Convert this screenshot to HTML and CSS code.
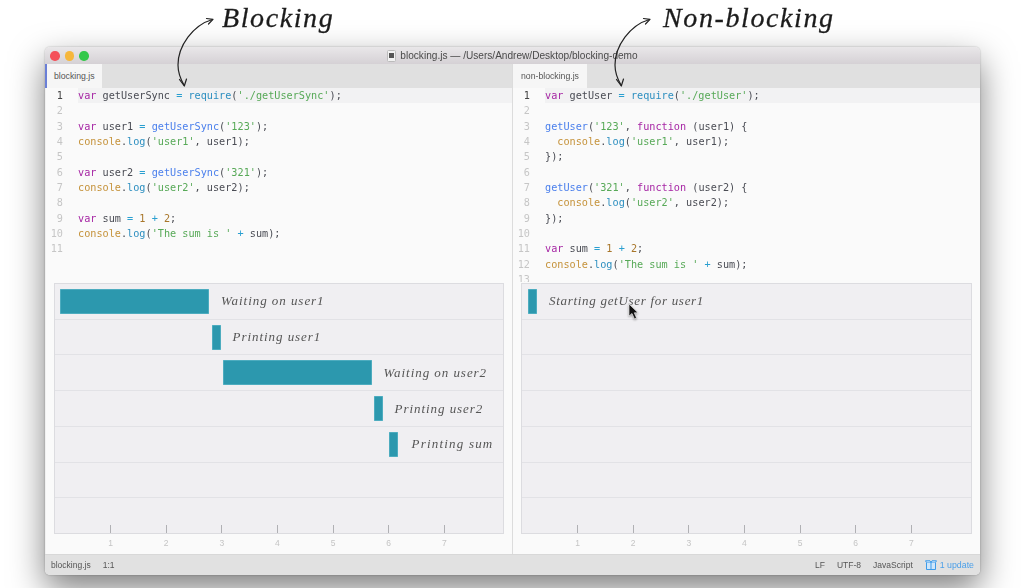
FILE: index.html
```html
<!DOCTYPE html>
<html lang="en">
<head>
<meta charset="utf-8">
<title>blocking.js</title>
<link rel="stylesheet" href="styles.css">
</head>
<body>
<div class="note note-a">Blocking</div>
<div class="note note-b">Non-blocking</div>
<svg class="arrow arrow-a" width="60" height="80" viewBox="0 0 60 80" fill="none" stroke="#222" stroke-width="1.2" stroke-linecap="round" stroke-linejoin="round"><path d="M35.500 6.500C16 12 1 33 1 52C1 60 3.500 66 7 72"/><path d="M29.500 5.500L36 6.300L31.500 11"/><path d="M2.500 66.500L7.300 73L9.500 66"/></svg>
<svg class="arrow arrow-b" width="60" height="80" viewBox="0 0 60 80" fill="none" stroke="#222" stroke-width="1.2" stroke-linecap="round" stroke-linejoin="round"><path d="M35.500 6.500C16 12 1 33 1 52C1 60 3.500 66 7 72"/><path d="M29.500 5.500L36 6.300L31.500 11"/><path d="M2.500 66.500L7.300 73L9.500 66"/></svg>
<div class="window">
  <header class="titlebar">
    <div class="lights"><i class="light red"></i><i class="light yellow"></i><i class="light green"></i></div>
    <div class="title"><svg class="doc" width="9" height="12" viewBox="0 0 9 12"><rect x="0.500" y="0.500" width="8" height="11" rx="1" fill="#f2f2f2" stroke="#bbb"/><rect x="2" y="3" width="5" height="5" fill="#555"/></svg><span>blocking.js — /Users/Andrew/Desktop/blocking-demo</span></div>
  </header>
  <main class="panes">
    <section class="pane pane-left">
      <div class="tabs"><div class="tab tab-focus">blocking.js</div></div>
      <div class="code">
        <div class="line current"><span class="ln">1</span><span class="src"><b class="k">var</b> getUserSync <b class="o">=</b> <b class="r">require</b>(<b class="s">'./getUserSync'</b>);</span></div>
        <div class="line"><span class="ln">2</span><span class="src"></span></div>
        <div class="line"><span class="ln">3</span><span class="src"><b class="k">var</b> user1 <b class="o">=</b> <b class="f">getUserSync</b>(<b class="s">'123'</b>);</span></div>
        <div class="line"><span class="ln">4</span><span class="src"><b class="c">console</b>.<b class="r">log</b>(<b class="s">'user1'</b>, user1);</span></div>
        <div class="line"><span class="ln">5</span><span class="src"></span></div>
        <div class="line"><span class="ln">6</span><span class="src"><b class="k">var</b> user2 <b class="o">=</b> <b class="f">getUserSync</b>(<b class="s">'321'</b>);</span></div>
        <div class="line"><span class="ln">7</span><span class="src"><b class="c">console</b>.<b class="r">log</b>(<b class="s">'user2'</b>, user2);</span></div>
        <div class="line"><span class="ln">8</span><span class="src"></span></div>
        <div class="line"><span class="ln">9</span><span class="src"><b class="k">var</b> sum <b class="o">=</b> <b class="n">1</b> <b class="o">+</b> <b class="n">2</b>;</span></div>
        <div class="line"><span class="ln">10</span><span class="src"><b class="c">console</b>.<b class="r">log</b>(<b class="s">'The sum is '</b> <b class="o">+</b> sum);</span></div>
        <div class="line"><span class="ln">11</span><span class="src"></span></div>
      </div>
      <div class="chart">
        <div class="row"><i class="bar" style="margin-left:5px;width:149px"></i><span class="label">Waiting on user1</span></div>
        <div class="row"><i class="bar" style="margin-left:157px;width:8.500px"></i><span class="label">Printing user1</span></div>
        <div class="row"><i class="bar" style="margin-left:168px;width:148.500px"></i><span class="label">Waiting on user2</span></div>
        <div class="row"><i class="bar" style="margin-left:319px;width:8.500px"></i><span class="label">Printing user2</span></div>
        <div class="row"><i class="bar" style="margin-left:334px;width:8.500px"></i><span class="label label-sum">Printing sum</span></div>
        <div class="row"></div>
        <div class="row row-ticks"><i></i><i></i><i></i><i></i><i></i><i></i><i></i></div>
      </div>
      <div class="axis"><span>1</span><span>2</span><span>3</span><span>4</span><span>5</span><span>6</span><span>7</span></div>
    </section>
    <section class="pane">
      <div class="tabs"><div class="tab">non-blocking.js</div></div>
      <div class="code">
        <div class="line current"><span class="ln">1</span><span class="src"><b class="k">var</b> getUser <b class="o">=</b> <b class="r">require</b>(<b class="s">'./getUser'</b>);</span></div>
        <div class="line"><span class="ln">2</span><span class="src"></span></div>
        <div class="line"><span class="ln">3</span><span class="src"><b class="f">getUser</b>(<b class="s">'123'</b>, <b class="k">function</b> (user1) {</span></div>
        <div class="line"><span class="ln">4</span><span class="src">  <b class="c">console</b>.<b class="r">log</b>(<b class="s">'user1'</b>, user1);</span></div>
        <div class="line"><span class="ln">5</span><span class="src">});</span></div>
        <div class="line"><span class="ln">6</span><span class="src"></span></div>
        <div class="line"><span class="ln">7</span><span class="src"><b class="f">getUser</b>(<b class="s">'321'</b>, <b class="k">function</b> (user2) {</span></div>
        <div class="line"><span class="ln">8</span><span class="src">  <b class="c">console</b>.<b class="r">log</b>(<b class="s">'user2'</b>, user2);</span></div>
        <div class="line"><span class="ln">9</span><span class="src">});</span></div>
        <div class="line"><span class="ln">10</span><span class="src"></span></div>
        <div class="line"><span class="ln">11</span><span class="src"><b class="k">var</b> sum <b class="o">=</b> <b class="n">1</b> <b class="o">+</b> <b class="n">2</b>;</span></div>
        <div class="line"><span class="ln">12</span><span class="src"><b class="c">console</b>.<b class="r">log</b>(<b class="s">'The sum is '</b> <b class="o">+</b> sum);</span></div>
        <div class="line line-clipped"><span class="ln">13</span><span class="src"></span></div>
      </div>
      <div class="chart">
        <div class="row"><i class="bar" style="margin-left:6px;width:9px"></i><span class="label label-long">Starting getUser for user1</span></div>
        <div class="row"></div>
        <div class="row"></div>
        <div class="row"></div>
        <div class="row"></div>
        <div class="row"></div>
        <div class="row row-ticks"><i></i><i></i><i></i><i></i><i></i><i></i><i></i></div>
      </div>
      <div class="axis"><span>1</span><span>2</span><span>3</span><span>4</span><span>5</span><span>6</span><span>7</span></div>
    </section>
  </main>
  <footer class="status">
    <span>blocking.js</span><span class="pos">1:1</span>
    <span class="right">LF</span><span>UTF-8</span><span>JavaScript</span>
    <span class="update"><svg width="12" height="10" viewBox="0 0 12 10" fill="#cfe6fa" stroke="#3d9be9" stroke-width="1"><path d="M1.500 2.500h9v7h-9z"/><path d="M1.500 2.500L.5 .8h4.500L6 2.500L7 .8h4.500l-1 1.700M6 2.500v7"/></svg>1 update</span>
  </footer>
</div>
<svg class="cursor" width="12" height="17" viewBox="0 0 12 17"><path d="M1 1V13L4 10.500L6.500 16L8.500 15L6.300 9.800H10Z" fill="#111" stroke="#fff" stroke-width=".6"/></svg>
</body>
</html>
```
FILE: styles.css
```css
* { box-sizing: border-box; }
html, body { margin: 0; height: 100%; }
body {
  position: relative;
  width: 1022px;
  height: 588px;
  overflow: hidden;
  background: #fff;
  padding: 47px 0 0 45px;
  font-family: "Liberation Sans", Arial, sans-serif;
  filter: blur(0.35px);
}
.note {
  position: absolute;
  top: 2px;
  font-family: "Liberation Serif", serif;
  font-style: italic;
  font-size: 28px;
  line-height: 32px;
  color: #1c1c1c;
  letter-spacing: 1.600px;
  -webkit-text-stroke: .3px #1c1c1c;
}
.note-a { left: 222px; }
.note-b { left: 663px; }
.arrow { position: absolute; z-index: 2; top: 13px; }
.arrow-a { left: 177px; }
.arrow-b { left: 614px; }
.cursor { position: absolute; left: 628px; top: 303px; z-index: 3; filter: drop-shadow(0 1px 1px rgba(0,0,0,.4)); }
.window {
  width: 935px;
  height: 528px;
  border-radius: 5px;
  overflow: hidden;
  display: flex;
  flex-direction: column;
  background: #fafafa;
  box-shadow: 0 14px 34px rgba(0,0,0,.5), 0 0 2px rgba(0,0,0,.3);
}
.titlebar {
  position: relative;
  flex: 0 0 17px;
  display: flex;
  align-items: center;
  justify-content: center;
  background: linear-gradient(#e9e7e9, #d5d1d5);
}
.lights { position: absolute; left: 5.300px; top: 4px; display: flex; gap: 5px; }
.light { width: 9.500px; height: 9.500px; border-radius: 50%; }
.red { background: #f4515a; }
.yellow { background: #f6b73c; }
.green { background: #34c84a; }
.title { display: flex; align-items: center; gap: 4px; font-size: 10.100px; color: #4a4a4a; }
.panes { flex: 1; display: flex; min-height: 0; }
.pane { flex: 0 0 467px; min-width: 0; display: flex; flex-direction: column; }
.pane-left { flex: 0 0 468px; border-right: 1px solid #dcdcdc; border-left: 1px solid #f0f0f0; }
.tabs { flex: 0 0 24px; background: #e0e0e0; display: flex; }
.tab { width: 74px; background: #f6f6f6; font-size: 8.700px; line-height: 24px; color: #555; padding-left: 8px; }
.tab-focus { width: 57px; border-left: 2px solid #6a7fd6; margin-left: -1px; padding-left: 7px; }
.code {
  flex: 0 0 195px;
  overflow: hidden;
  font-family: "DejaVu Sans Mono", monospace;
  font-size: 10.200px;
  line-height: 15.350px;
  color: #4a4c54;
}
.line { display: flex; height: 15.350px; }
.line-clipped { height: 10px; line-height: 15.350px; overflow: hidden; }
.ln { flex: 0 0 17px; text-align: right; color: #c6c6c6; }
.src { flex: 1; margin-left: 15px; white-space: pre; }
.current .ln { color: #444; }
.current .src { background: #f2f2f3; }
.code b { font-weight: normal; }
.k { color: #a626a4; }
.o { color: #2a9fd0; }
.r { color: #2d8fc0; }
.f { color: #4a7fec; }
.s { color: #57a957; }
.c { color: #c5923a; }
.n { color: #a8762a; }
.chart {
  flex: 0 0 251px;
  margin: 0 8px;
  display: flex;
  flex-direction: column;
  background: #f0eff2;
  border: 1px solid #dcdce0;
  border-bottom-width: 1.500px;
}
.row {
  flex: 1;
  display: flex;
  align-items: center;
  border-bottom: 1px solid #e2e2e6;
}
.row:last-child { border-bottom: 0; }
.bar { flex: none; height: 25px; background: #2c98ae; box-shadow: inset 0 0 0 .5px #6fc0d0; }
.label {
  margin-left: 12px;
  font-family: "Liberation Serif", serif;
  font-style: italic;
  font-size: 13px;
  letter-spacing: .95px;
  color: #555;
  white-space: nowrap;
}
.label-sum { margin-left: 14px; letter-spacing: 1.200px; }
.label-long { letter-spacing: .7px; }
.row-ticks {
  align-items: flex-end;
  padding-left: 27.700px;
}
.row-ticks i { flex: 0 0 55.650px; display: flex; justify-content: center; }
.row-ticks i::before { content: ""; width: 1px; height: 8px; background: #b0b0b4; }
.axis {
  flex: 1;
  display: flex;
  padding-left: 36.700px;
  font-size: 8.500px;
  line-height: 19px;
  color: #c4c4c4;
}
.axis span { flex: 0 0 55.650px; text-align: center; }
.status {
  flex: 0 0 21px;
  display: flex;
  align-items: center;
  gap: 12px;
  padding: 0 6px;
  background: #e1e1e1;
  border-top: 1px solid #d8d8d8;
  font-size: 8.500px;
  color: #555;
}
.status .right { margin-left: auto; }
.update { display: flex; align-items: center; gap: 3px; color: #4b9fe8; font-size: 8.800px; }
```
